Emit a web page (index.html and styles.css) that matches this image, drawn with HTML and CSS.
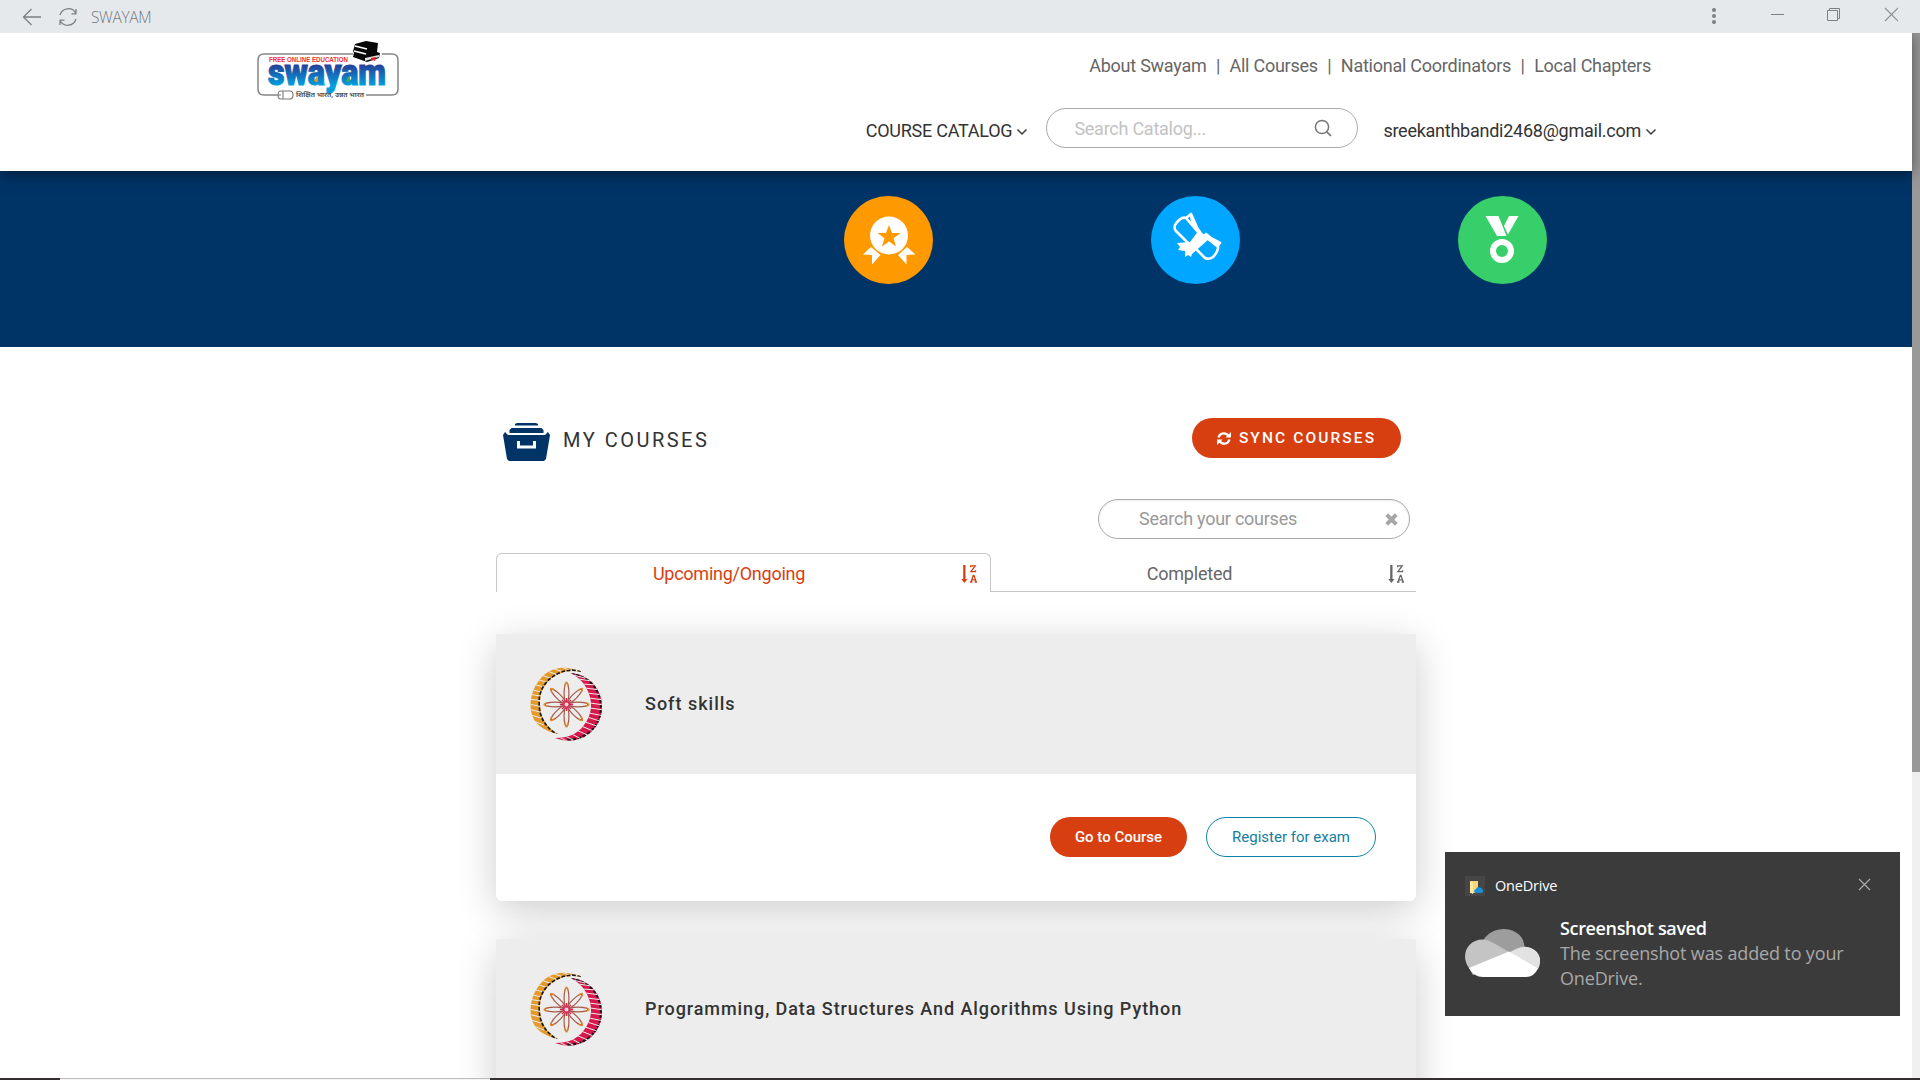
FILE: index.html
```html
<!DOCTYPE html>
<html lang="en">
<head>
<meta charset="utf-8">
<title>SWAYAM</title>
<link rel="stylesheet" href="styles.css">
</head>
<body>
<svg class="defs" width="0" height="0">
  <symbol id="chevron" viewBox="0 0 12 8"><path d="M1.500 1.500 6 6l4.500-4.500" fill="none" stroke="#3c3c3c" stroke-width="1.500"/></symbol>
  <symbol id="sort" viewBox="0 0 16 20">
    <path d="M2.200 1h2.300v14h2L3.400 19 .3 15h1.900z" fill="currentColor"/>
    <path d="M9.700 3.200V1.900h4.500L9.900 7.700h4.600V6.300M10 18l2.300-6.700h.6L15.200 18M11 15.800h3.300M9 18h2.500M13.700 18H16" fill="none" stroke="currentColor" stroke-width="1.300"/>
  </symbol>
  <clipPath id="left-rim"><path d="M50.500 4C38-1 24-1 14 8 4 17-1 31 1 44c2 13 13 20 27 23C16 60 10 50 10 37 9 23 18 11 30 6.500 37 3.500 44 3.500 51 5z"/></clipPath>
  <clipPath id="right-rim"><path d="M41 6c13 1 24 9 28.500 21C75 41 71 57 60 66 49 75 36 75 25 71c13 0 23-4 29-13 7-9 9-20 5-31C56 18 50 11 41 6z"/></clipPath>
  <symbol id="emblem" viewBox="0 0 74 75">
    <g clip-path="url(#left-rim)">
      <path d="M0 0h55v75H0z" fill="#e39a2b"/>
      <path d="M-2 58l14 7M-2 52l16 6M-2 47l16 5M-2 42l16 4M-2 37l16 3M-2 32l16 2M-2 27l18 3M-1 22l20 5M2 17l20 5M6 12l19 6M11 8l18 6M17 4l17 6M24 2l16 5M31 0l14 5M38 0l12 5M8 65l16 2" stroke="#ededed" stroke-width="1"/>
      <path d="M51 5C43 3 36 4 30 6.500 17 12 9 23 10 37c0 13 6 23 18 30" fill="none" stroke="#171717" stroke-width="3.200" stroke-dasharray="3.600 1.700"/>
    </g>
    <g clip-path="url(#right-rim)">
      <path d="M20 0h54v75H20z" fill="#d8174b"/>
      <path d="M41 6c13 1 24 9 28.500 21C75 41 71 57 60 66 53 72 44 74 36 73" fill="none" stroke="#171717" stroke-width="4" stroke-dasharray="3.600 1.700"/>
      <path d="M43 8l12 3M48 12l14 2M52 17l15 1M55 21l16 2M57 26l16 2M59 31l15 2M60 36l14 2M60 41l14 2M59 46l15 3M57 50l16 5M55 55l15 5M51 59l15 6M46 63l14 6M40 66l13 7M33 68l12 6M27 69l10 5" stroke="#ededed" stroke-width="1"/>
    </g>
    <g fill="none" stroke="#a45c4b" stroke-width="1.200">
      <g id="petals"><ellipse cx="36.500" cy="26" rx="2.400" ry="10"/><ellipse cx="36.500" cy="49" rx="2.400" ry="10"/><ellipse cx="25" cy="37.500" rx="10" ry="2.400"/><ellipse cx="48" cy="37.500" rx="10" ry="2.400"/></g>
      <use href="#petals" transform="rotate(45 36.500 37.500)"/>
    </g>
    <g fill="none" stroke="#e18a2e" stroke-width="1.200">
      <g id="tips"><path d="M34.500 19q2-8 4 0M34.500 56q2 8 4 0M18 35.500q-8 2 0 4M55 35.500q8 2 0 4"/></g>
      <use href="#tips" transform="rotate(45 36.500 37.500)"/>
    </g>
    <path d="M36.500 31v13M30 37.500h13M32 33l9 9M41 33l-9 9" stroke="#db2356" stroke-width="1.400"/>
    <circle cx="36.500" cy="37.500" r="2" fill="#f5d5de"/>
  </symbol>
</svg>

<div class="titlebar">
  <svg class="back" width="20" height="18" viewBox="0 0 20 18"><path d="M19 9H1.500M9.500 1 1.500 9l8 8" fill="none" stroke="#7d8083" stroke-width="1.300"/></svg>
  <svg class="reload" width="20" height="20" viewBox="0 0 20 20"><path d="M2 8C4 1 14-1 18 6.500V2M18.500 6.800h-5M18 12C16 19 6 21 2 13.500V18M1.500 13.200h5" fill="none" stroke="#7d8083" stroke-width="1.300"/></svg>
  <span class="window-title">SWAYAM</span>
  <svg class="window-controls" width="190" height="20" viewBox="0 0 190 20">
    <g fill="#7d8083"><circle cx="6" cy="5" r="2"/><circle cx="6" cy="11" r="2"/><circle cx="6" cy="17" r="2"/></g>
    <path d="M63 9.500h13M119.500 5.500h10v10h-10zM121.500 5.500v-2h10v10h-2" fill="none" stroke="#7d8083"/>
    <path d="M177 3l13 13M190 3l-13 13" stroke="#8d9093" stroke-width="1.100"/>
  </svg>
</div>

<div class="viewport">
  <div class="page">
    <header class="header">
      <svg class="logo" width="144" height="62" viewBox="0 0 144 62">
        <defs><linearGradient id="ink" gradientUnits="userSpaceOnUse" x1="0" y1="24" x2="0" y2="48"><stop offset="0" stop-color="#263c96"/><stop offset=".9" stop-color="#00a0df"/></linearGradient></defs>
        <path d="M97 14H8q-6 0-6 6v29q0 6 6 6h13M126 14h10q6 0 6 6v29q0 6-6 6h-26" fill="none" stroke="#858585" stroke-width="1.500"/>
        <text x="13" y="21.500" class="logo-top" textLength="79" lengthAdjust="spacingAndGlyphs">FREE ONLINE EDUCATION</text>
        <text x="12" y="45" class="logo-word" textLength="118" lengthAdjust="spacingAndGlyphs">swayam</text>
        <path d="M58 41q3-6 4-3.500V41q-1 2-4 0z" fill="#f39322"/><path d="M90 41q3-6 4-3.500V41q-1 2-4 0z" fill="#35ae49"/>
        <path d="M99 4 110 1l12 2-1 9 3 1-1 5-12 4-14-5 1-4-1-2 1-3z" fill="#080808"/>
        <path d="M99 6l12 3M98 11l12 3" stroke="#fff" stroke-width="1.800"/><path d="M109 18l14-3v2l-14 4z" fill="#ddd"/><path d="M115 18l5-1-1 4-2-1-2 1z" fill="#ed1c24"/>
        <path d="M25 51h9q3 0 3 4t-3 4h-9q-3 0-3-4t3-4zM27 51v8M21 55h4" fill="#fff" stroke="#777" stroke-width="1.100"/>
        <text x="40" y="57" class="logo-tag" textLength="68" lengthAdjust="spacingAndGlyphs">शिक्षित भारत, उन्नत भारत</text>
      </svg>
      <div class="menus">
        <nav class="links"><a>About Swayam</a><i>|</i><a>All Courses</a><i>|</i><a>National Coordinators</a><i>|</i><a>Local Chapters</a></nav>
        <div class="tools">
          <span class="menu catalog">COURSE CATALOG</span><svg width="12" height="8"><use href="#chevron"/></svg>
          <div class="search top-search"><span>Search Catalog...</span><svg width="18" height="18" viewBox="0 0 18 18"><circle cx="8" cy="8" r="6.600" fill="none" stroke="#777" stroke-width="1.500"/><path d="M12.800 12.800 17 17" stroke="#777" stroke-width="1.700"/></svg></div>
          <span class="menu email">sreekanthbandi2468@gmail.com</span><svg width="12" height="8"><use href="#chevron"/></svg>
        </div>
      </div>
    </header>

    <section class="banner">
      <svg width="89" height="88" viewBox="0 0 89 88">
        <ellipse cx="44.500" cy="44" rx="44.500" ry="44" fill="#f90"/>
        <path d="M27 51 19 58.500l9 .5v9.500L36.500 59zM63 51l8.500 7.500-9 .5v9.500L54 59z" fill="#fff"/>
        <circle cx="45" cy="39.500" r="19" fill="#fff"/>
        <path d="m45 29 3 8h8.500l-7 5.200 2.600 8.300-7.100-5-7.100 5 2.600-8.300-7-5.200H42z" fill="#f90"/>
      </svg>
      <svg width="89" height="88" viewBox="0 0 89 88">
        <ellipse cx="44.500" cy="44" rx="44.500" ry="44" fill="#00a6ff"/>
        <g fill="none" stroke="#fff" stroke-width="2.600" stroke-linejoin="round" stroke-linecap="round"><path d="M35 22q-5-2-11 7-1 4 1 6l12 12M35 22l12 14M35 22l5-4 8 18M40 18l1 7 8 11M45 53l9 9q4 2 8-1 6-6 5-13L55 38M54 39l15 8-3 3-10-8"/></g>
        <path d="M48 34 58 43 41 58l-1 3-3-2-3 2v-6l-7-1 2-3-3-4 13-1z" fill="#fff"/>
      </svg>
      <svg width="89" height="88" viewBox="0 0 89 88">
        <ellipse cx="44.500" cy="44" rx="44.500" ry="44" fill="#36cf69"/>
        <path d="M27.500 20h13l8 20H39zM51 20h9.500L50 38.500l-4-8.500z" fill="#fff"/>
        <circle cx="44" cy="55" r="9" fill="none" stroke="#fff" stroke-width="6"/>
      </svg>
    </section>

    <main class="courses">
      <div class="heading">
        <svg width="47" height="38" viewBox="0 0 47 38"><path d="M12 2.500V1l2-1h19l2 1v1.500zM6.500 10V7l2-2h30l2 2v3zM0 12l2-3 3 3h37l3-3 2 3-4 24-2 2H6l-2-2z" fill="#036"/><path d="M15.500 18v6h16v-6" fill="none" stroke="#fff" stroke-width="3"/></svg>
        <h1>MY COURSES</h1>
        <button class="pill sync"><svg width="14" height="13" viewBox="0 0 14 13"><path d="M1.500 5.500C3 .5 9 .2 11.500 4M12.500 7.500C11 12.500 5 12.800 2.500 9" fill="none" stroke="#fff" stroke-width="2.300"/><path d="M14 0v5.500H8.500zM0 13V7.500h5.500z" fill="#fff"/></svg><span>SYNC COURSES</span></button>
      </div>
      <div class="search own-search"><span>Search your courses</span><svg width="13" height="13" viewBox="0 0 13 13"><path d="M1.700 1.700l9.600 9.600M11.300 1.700l-9.600 9.600" stroke="#a6a6a6" stroke-width="4"/></svg></div>
      <div class="tabs">
        <div class="tab active"><span>Upcoming/Ongoing</span><svg width="16" height="20"><use href="#sort"/></svg></div>
        <div class="tab"><span>Completed</span><svg width="16" height="20"><use href="#sort"/></svg></div>
      </div>
      <article class="card">
        <div class="card-head"><svg width="74" height="75"><use href="#emblem"/></svg><h2>Soft skills</h2></div>
        <div class="card-body"><button class="pill go">Go to Course</button><button class="pill register">Register for exam</button></div>
      </article>
      <article class="card">
        <div class="card-head"><svg width="74" height="75"><use href="#emblem"/></svg><h2 class="long">Programming, Data Structures And Algorithms Using Python</h2></div>
        <div class="card-body"></div>
      </article>
    </main>
  </div>
  <div class="scrollbar"><div class="thumb"></div></div>
</div>
<div class="taskbar"><div class="dark start"></div><div class="light"></div><div class="dark rest"></div></div>

<aside class="toast">
  <div class="toast-top">
    <svg width="20" height="20" viewBox="0 0 20 20"><path d="M0 0h20v20H0z" fill="#464646"/><path d="M5 5h8v12H5z" fill="#f8d775"/><path d="M5 5l3 1.500V18l-3-1.500z" fill="#ffe9a2"/><path d="M10 17q-2-3 1-4 1-3 4-1.500 3 .5 3 3.500 0 2-2 2z" fill="#1490df"/></svg>
    <span class="app">OneDrive</span>
    <svg class="close" width="13" height="13" viewBox="0 0 13 13"><path d="M1 1l11 11M12 1 1 12" stroke="#aaa" stroke-width="1.200"/></svg>
  </div>
  <div class="toast-body">
    <svg width="75" height="48" viewBox="0 0 75 48">
      <path d="M18.500 11C27-3 50-4 58 11l2 8-16 10-26-10z" fill="#9d9d9d"/>
      <path d="M4 39C-5 27 2 10 18.500 10.500q4 0 9 3L46 24l2 6-40 16z" fill="#c4c4c4"/>
      <path d="M43 24l8-4q8-4 15-1c10 4 11 14 7 21l-6 3-25-16z" fill="#e2e2e2"/>
      <path d="M4 39l40-16.500L73 39.500Q69 48 61 48H18Q9 48 4 39z" fill="#fff"/>
    </svg>
    <div class="message"><strong>Screenshot saved</strong><p><span class="line">The screenshot was added to your</span><br>OneDrive.</p></div>
  </div>
</aside>
</body>
</html>
```
FILE: styles.css
```css
* { box-sizing: border-box; }
body { margin: 0; width: 1920px; height: 1080px; overflow: hidden; display: flex; flex-direction: column; background: #fff; font-family: Roboto, "Liberation Sans", sans-serif; font-size: 18px; line-height: 24px; letter-spacing: -.25px; color: #333; }
svg { display: block; flex: none; letter-spacing: 0; }
.defs { position: absolute; }
h1, h2, p { margin: 0; }
button { font: inherit; letter-spacing: 0; cursor: pointer; }

.titlebar { flex: none; height: 33px; display: flex; align-items: center; padding: 0 22px 0 22px; background: #e6e9ec; }
.reload { margin-left: 16px; }
.window-title { margin-left: 13px; font: 300 15.500px/20px "Open Sans", sans-serif; letter-spacing: -.35px; color: #75787b; padding-top: 1px; }
.window-controls { margin-left: auto; margin-bottom: 3px; }

.viewport { flex: none; height: 1045px; display: flex; overflow: hidden; }
.page { width: 1912px; flex: none; }
.scrollbar { width: 8px; background: #f0f0f0; }
.thumb { height: 739px; background: #999; }

.header { position: relative; z-index: 1; height: 138px; display: flex; justify-content: space-between; padding: 6px 255px 0 256px; background: #fff; box-shadow: 0 2px 14px rgba(0,0,0,.5); }
.logo { margin-top: 1px; overflow: visible; }
.logo-top { font: 700 6.500px "Liberation Sans", sans-serif; fill: #ee3033; }
.logo-word { font: 900 37px Roboto, sans-serif; fill: url(#ink); stroke: url(#ink); stroke-width: 1.200px; }
.logo-tag { font: 700 6.500px "Noto Sans", sans-serif; fill: #555; }
.menus { display: flex; flex-direction: column; align-items: flex-end; }
.links { display: flex; margin: 15px 6px 0 0; color: #666; }
.links i { font-style: normal; width: 23px; text-align: center; }
.tools { display: flex; align-items: center; margin-top: 29px; height: 47px; color: #333; }
.menu { padding-top: 1px; }
.tools > svg { margin-left: 4px; margin-top: 2px; }
.search { flex: none; width: 312px; height: 40px; border: 1px solid #aaa; border-radius: 20px; display: flex; align-items: center; justify-content: space-between; }
.top-search { margin: 0 25px 6px 18px; padding: 0 25px 0 27px; color: #c2c2c2; }
.top-search span { padding-top: 2px; }

.banner { height: 176px; background: #036; padding: 25px 0 0 844px; display: flex; gap: 218px; }

.courses { width: 920px; margin-left: 496px; }
.heading { height: 111px; padding: 71px 15px 0 7px; display: flex; align-items: flex-start; }
.heading > svg { margin-top: 5px; }
h1 { margin: 10px 0 0 13px; font-size: 20px; font-weight: 400; letter-spacing: 2.500px; line-height: 24px; }
.pill { height: 40px; border-radius: 20px; border: 0; padding: 0; background: #d73e10; color: #fff; display: flex; align-items: center; justify-content: center; }
.sync { margin-left: auto; width: 209px; gap: 8px; font-size: 15.500px; font-weight: 500; letter-spacing: 2.100px; }
.own-search { margin: 41px 6px 0 auto; padding: 0 11px 0 40px; color: #999; box-shadow: inset 0 1px 2px rgba(0,0,0,.08); }
.tabs { display: flex; height: 39px; margin-top: 14px; color: #666; }
.tab { flex: 1; display: flex; align-items: center; padding: 4px 12px 0 0; border-bottom: 1px solid #c7c7c7; }
.tab span { flex: 1; text-align: center; }
.tab.active { flex: none; width: 495px; border: 1px solid #c7c7c7; border-bottom: 0; border-radius: 6px 6px 0 0; color: #d73e10; padding: 2px 13px 0 0; }
.tab:not(.active) span { letter-spacing: -.2px; }

.card { margin-top: 42px; border-radius: 0 0 6px 6px; background: #fff; box-shadow: 0 10px 40px rgba(0,0,0,.2); }
.card + .card { margin-top: 38px; }
.card-head { height: 140px; padding: 0 34px; display: flex; align-items: center; gap: 41px; background: #ededed; }
h2 { font-size: 18px; font-weight: 500; letter-spacing: 1px; line-height: 24px; }
.long { letter-spacing: .93px; }
.card-body { height: 127px; display: flex; justify-content: flex-end; gap: 19px; padding: 43px 40px 0; font-size: 15px; }
.go { width: 137px; font-weight: 500; }
.register { width: 170px; background: #fff; border: 1px solid #0d83a8; color: #147da0; }

.taskbar { flex: none; height: 2px; display: flex; }
.dark { background: #332f30; }
.start { width: 60px; }
.light { width: 430px; background: #f4f4f4; border-top: 1px solid #bdbdbd; }
.rest { flex: 1; }

.toast { position: absolute; z-index: 2; left: 1445px; top: 852px; width: 455px; height: 164px; padding: 24px 29px 0 20px; background: #3b3b3b; color: #fff; font-family: "Open Sans", "Noto Sans", sans-serif; }
.toast-top { display: flex; align-items: center; height: 20px; }
.app { margin-left: 10px; font-size: 14.500px; letter-spacing: -.2px; }
.close { margin: -3px 0 0 auto; }
.toast-body { display: flex; gap: 20px; margin-top: 20px; }
.toast-body svg { margin-top: 13px; }
.message { font-size: 18px; line-height: 25px; letter-spacing: -.15px; white-space: nowrap; }
.message strong { display: block; font-weight: 600; letter-spacing: -.35px; }
.message p { color: #a8a8a8; }
```
